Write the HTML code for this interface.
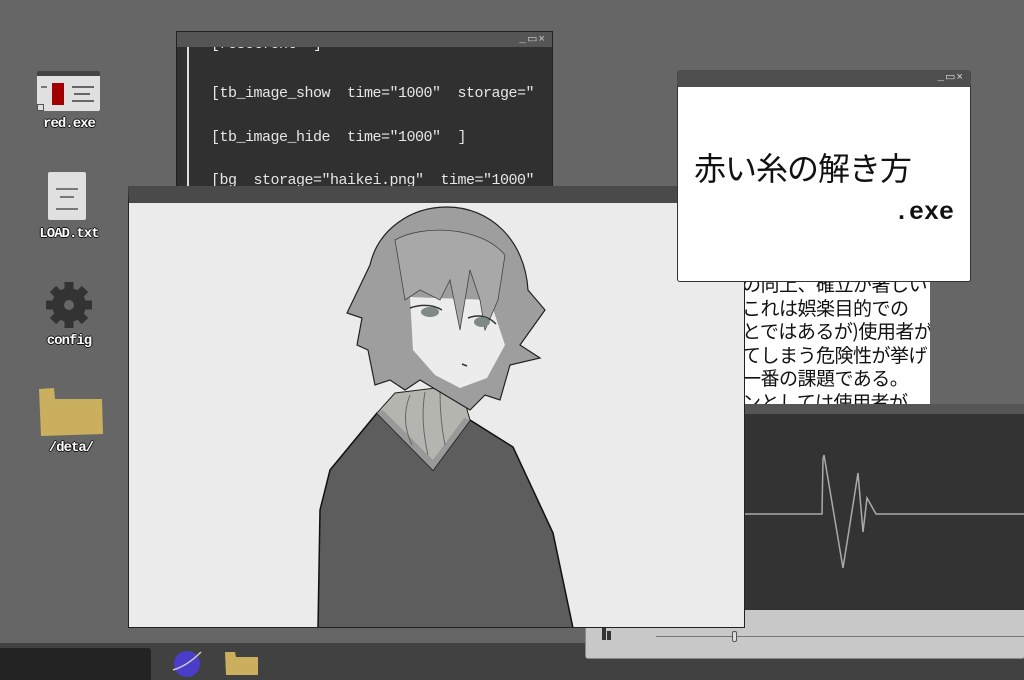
<!DOCTYPE html>
<html><head><meta charset="utf-8"><style>
*{margin:0;padding:0;box-sizing:border-box}
body{width:1024px;height:680px;background:#666;position:relative;overflow:hidden;font-family:"Liberation Mono","Noto Sans CJK JP",monospace}
.abs{position:absolute}
.lbl{position:absolute;color:#fff;font-size:14px;font-weight:bold;font-family:"Liberation Mono",monospace;text-shadow:1px 0 #111,-1px 0 #111,0 1px #111,0 -1px #111;text-align:center;width:100px;letter-spacing:-1px}
.tb{color:#ccc;font-size:11px;position:absolute;right:6px;top:0;letter-spacing:1px}
.code div{position:absolute;left:34px;color:#e6e6e6;font-size:15px;white-space:pre;letter-spacing:-0.5px}
</style></head><body>

<!-- desktop icons -->
<div class="abs" style="left:37px;top:71px;width:63px;height:40px;background:#e0e0e0;border-top:5px solid #444;border-radius:2px"></div>
<div class="abs" style="left:52px;top:83px;width:12px;height:22px;background:#a00000"></div>
<div class="abs" style="left:72px;top:86px;width:22px;height:2px;background:#666"></div>
<div class="abs" style="left:74px;top:93px;width:16px;height:2px;background:#666"></div>
<div class="abs" style="left:72px;top:100px;width:22px;height:2px;background:#666"></div>
<div class="abs" style="left:41px;top:86px;width:6px;height:2px;background:#777"></div>
<div class="abs" style="left:37px;top:104px;width:7px;height:7px;border:1px solid #555;background:#ddd"></div>
<div class="lbl" style="left:19px;top:116px">red.exe</div>

<div class="abs" style="left:48px;top:172px;width:38px;height:48px;background:#e0e0e0;border-radius:2px"></div>
<div class="abs" style="left:56px;top:188px;width:22px;height:2px;background:#777"></div>
<div class="abs" style="left:60px;top:196px;width:14px;height:2px;background:#777"></div>
<div class="abs" style="left:56px;top:208px;width:22px;height:2px;background:#777"></div>
<div class="lbl" style="left:19px;top:226px">LOAD.txt</div>

<svg class="abs" style="left:40px;top:280px" width="58" height="50" viewBox="0 0 58 50">
<g fill="#333"><circle cx="29" cy="25" r="17"/>
<g stroke="#333" stroke-width="9">
<line x1="29" y1="2" x2="29" y2="48"/><line x1="6" y1="25" x2="52" y2="25"/>
<line x1="13" y1="9" x2="45" y2="41"/><line x1="45" y1="9" x2="13" y2="41"/></g></g>
<circle cx="29" cy="25" r="5" fill="#666"/></svg>
<div class="lbl" style="left:19px;top:333px">config</div>

<svg class="abs" style="left:37px;top:387px" width="70" height="54"><path d="M2 2 L17 1 L18 12 L65 12 L66 47 L4 49 Z" fill="#c9af5e"/></svg>
<div class="lbl" style="left:21px;top:440px">/deta/</div>

<!-- code window -->
<div class="abs code" style="left:176px;top:31px;width:377px;height:160px;background:#303030;border:1px solid #222;overflow:hidden">
<div style="left:10px;top:15px;width:2px;height:150px;background:#ddd"></div>
<div style="top:4px">[resetfont  ]</div>
<div style="top:53px">[tb_image_show  time="1000"  storage="</div>
<div style="top:97px">[tb_image_hide  time="1000"  ]</div>
<div style="top:140px">[bg  storage="haikei.png"  time="1000"</div>
<div style="left:0;top:0;width:377px;height:15px;background:#555;position:absolute"></div>
<span class="tb" style="color:#ccc">_▭×</span>
</div>

<!-- Japanese text window -->
<div class="abs" style="left:742px;top:245px;width:188px;height:162px;background:#fff;overflow:hidden;font-family:'Noto Sans CJK JP',sans-serif;font-size:19px;line-height:23.5px;color:#111;white-space:nowrap;letter-spacing:-0.5px">
<div style="margin-top:27px">の向上、確立が著しい</div>
<div>これは娯楽目的での</div>
<div>とではあるが)使用者が</div>
<div>てしまう危険性が挙げ</div>
<div>一番の課題である。</div>
<div>ンとしては使用者が</div>
</div>

<!-- taskbar -->
<div class="abs" style="left:0;top:643px;width:1024px;height:37px;background:#414141"></div>
<div class="abs" style="left:0;top:648px;width:151px;height:32px;background:#232323;border-radius:0 3px 0 0"></div>
<svg class="abs" style="left:170px;top:648px" width="36" height="30"><circle cx="17" cy="16" r="13" fill="#4a3dc9"/><path d="M3 22 Q17 18 31 4" stroke="#ccc" stroke-width="1.5" fill="none"/></svg>
<svg class="abs" style="left:223px;top:651px" width="38" height="26"><path d="M2 1 L12 1 L13 6 L35 6 L35 24 L3 24 Z" fill="#c9af5e"/></svg>

<!-- waveform window -->
<div class="abs" style="left:585px;top:404px;width:440px;height:255px;background:#c8c8c8;border:1px solid #888;border-radius:3px"></div>
<div class="abs" style="left:742px;top:404px;width:282px;height:206px;background:#333"></div>
<div class="abs" style="left:742px;top:404px;width:282px;height:10px;background:#555"></div>
<svg class="abs" style="left:742px;top:404px" width="282" height="206"><polyline points="0,110 78,110 80,110 81,55 82,51 101,164 116,69 121,128 125,94 134,110 282,110" fill="none" stroke="#aaa" stroke-width="1.5"/></svg>
<div class="abs" style="left:602px;top:627px;width:4px;height:13px;background:#333"></div>
<div class="abs" style="left:607px;top:631px;width:4px;height:9px;background:#333"></div>
<div class="abs" style="left:656px;top:636px;width:368px;height:1px;background:#777"></div>
<div class="abs" style="left:732px;top:631px;width:5px;height:11px;border:1px solid #555;border-radius:2px;background:#ddd"></div>

<!-- main image window -->
<div class="abs" style="left:128px;top:186px;width:617px;height:442px;background:#ebebeb;border:1px solid #222;border-top:17px solid #4a4a4a;overflow:hidden">
<svg width="617" height="425" viewBox="129 203 617 425" style="display:block">
<path d="M377 413 L330 470 L320 510 L318 628 L573 628 L553 533 L513 447 L470 420 L433 470 Z" fill="#5d5d5d" stroke="#111" stroke-width="1.5"/>
<path d="M377 413 L395 393 L460 385 L470 420 L433 470 Z" fill="#b5b5b0" stroke="#222" stroke-width="1"/>
<path d="M377 413 L433 470 L470 420 L464 418 L433 460 L383 410 Z" fill="#999"/>
<g stroke="#666" stroke-width="1" fill="none"><path d="M410 395 Q400 420 412 445"/><path d="M425 392 Q420 420 428 455"/><path d="M440 392 Q440 420 445 445"/></g>
<path d="M447 207 C410 207 378 230 370 265 L347 313 L362 318 L357 345 L368 350 L375 385 L390 380 L405 390 L420 380 L470 410 L485 395 L500 400 L510 365 L540 358 L520 345 L545 310 L528 290 C525 240 490 207 447 207 Z" fill="#9e9e9e" stroke="#222" stroke-width="1.2"/>
<path d="M410 297 L490 300 L505 345 L487 378 L460 388 L435 375 L413 350 Z" fill="#ececec"/>
<path d="M395 240 C420 225 480 225 505 255 L498 300 L485 330 L480 300 L470 270 L460 330 L450 280 L440 300 L420 290 L405 300 Z" fill="#a8a8a8" stroke="#444" stroke-width="0.8"/>
<g stroke="#333" stroke-width="1.5" fill="none"><path d="M410 308 Q428 302 442 310"/><path d="M468 318 Q484 312 496 324"/></g>
<ellipse cx="430" cy="312" rx="9" ry="5" fill="#7f8988"/>
<ellipse cx="482" cy="322" rx="8" ry="5" fill="#7f8988"/>
<line x1="462" y1="364" x2="467" y2="366" stroke="#333" stroke-width="1.5"/>
</svg>
</div>

<!-- title window -->
<div class="abs" style="left:677px;top:70px;width:294px;height:212px;background:#fff;border:1px solid #333;border-top:17px solid #4e4e4e;border-radius:3px">
<span class="tb" style="top:-17px;color:#ddd">_▭×</span>
<div style="position:absolute;left:16px;top:62px;font-family:'Noto Sans CJK JP',sans-serif;font-size:32px;color:#111;letter-spacing:-1px;line-height:36px">赤い糸の解き方</div>
<div style="position:absolute;right:16px;top:111px;font-family:'Liberation Mono',monospace;font-size:25px;font-weight:bold;color:#111">.exe</div>
</div>
</body></html>
